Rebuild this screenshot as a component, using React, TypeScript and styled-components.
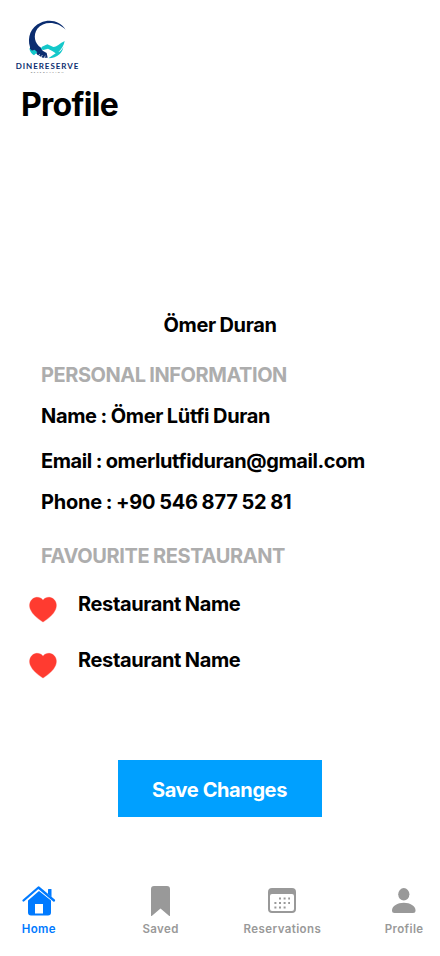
import React from "react";
import styled, { createGlobalStyle } from "styled-components";

const GlobalStyle = createGlobalStyle`
  * { box-sizing: border-box; }
  body { margin: 0; background: #fff; font-family: Inter, "Liberation Sans", sans-serif; }
`;

const Screen = styled.main`
  width: 440px;
  height: 956px;
  display: flex;
  flex-direction: column;
  overflow: hidden;
  background: #fff;
  color: #000;
`;

const Header = styled.header`
  height: 312px;
  padding: 14px 0 0 8px;
`;

const LogoMark = styled.svg`
  display: block;
  width: 80px;
  height: 64px;
`;

const PageTitle = styled.h1`
  margin: 6px 0 0 13px;
  font-size: 32px;
  line-height: 42px;
  font-weight: 700;
  letter-spacing: -0.7px;
`;

const Line = styled.p<{ $gap?: number; $muted?: boolean; $spacing?: number }>`
  margin: ${(p) => p.$gap ?? 0}px 0 0;
  font-size: 20px;
  line-height: 24px;
  font-weight: 700;
  letter-spacing: ${(p) => p.$spacing ?? -0.37}px;
  word-spacing: -0.6px;
  white-space: nowrap;
  color: ${(p) => (p.$muted ? "#adadad" : "#000")};
`;

const DisplayName = styled(Line)`
  text-align: center;
`;

const Details = styled.section`
  padding: 26px 0 0 41px;
`;

const Favourites = styled.ul`
  list-style: none;
  margin: 24px 0 0;
  padding: 0 0 0 28px;
  display: flex;
  flex-direction: column;
  gap: 24px;
`;

const Favourite = styled.li`
  display: flex;
  height: 32px;
  gap: 20px;
`;

const Heart = styled.svg`
  width: 30px;
  height: 28px;
  margin-top: 4px;
`;

const SaveButton = styled.button`
  align-self: center;
  width: 204px;
  height: 57px;
  margin-top: 80px;
  padding: 3px 1px 0 0;
  border: 0;
  background: #00a0ff;
  color: #fff;
  font: 700 20px/24px Inter, sans-serif;
  letter-spacing: -0.4px;
`;

const TabBar = styled.nav`
  width: 487px;
  margin: 67px 0 0 -22px;
  display: grid;
  grid-template-columns: repeat(4, 1fr);
`;

const Tab = styled.a<{ $active?: boolean }>`
  display: flex;
  flex-direction: column;
  align-items: center;
  color: ${(p) => (p.$active ? "#007aff" : "#999")};
  font-size: 11.5px;
  line-height: 18px;
  font-weight: 600;
  letter-spacing: 0.4px;
`;

const TabIcon = styled.svg`
  width: 36px;
  height: 36px;
  fill: currentColor;
`;

function Logo() {
  return (
    <LogoMark viewBox="0 0 240 192" role="img" aria-label="DineReserve">
      <path fill="#0b2d70" d="M173 47C156 21 126 14 98 26C68 38 57 70 66 99L66 111L80 110L88 122L104 131L119 131L116 117L104 110L99 101C79 88 75 63 88 44C106 22 145 20 173 47Z" />
      <path fill="#14c8ca" d="M170 81C155 88 149 98 136 99L118 91L102 98L98 105L106 108L120 104L134 112L143 118L121 133C149 133 165 113 166 98C164 105 158 112 151 115C162 103 168 93 170 81Z" />
      <path fill="#14c8ca" d="M64 102C65 112 70 119 78 124L88 115L80 107L72 110Z" />
      <path fill="none" stroke="#fff" strokeWidth="2" d="M91 127L95 120M99 131L103 123M108 133L112 125" />
      <text x="23" y="164" textLength="188" fill="#0b2d70" fontFamily="Lato, sans-serif" fontWeight="700" fontSize="24">DINERESERVE</text>
      <text x="68" y="177" textLength="98" fill="#777" fontFamily="Lato, sans-serif" fontWeight="700" fontSize="7.500">RESERVATION</text>
    </LogoMark>
  );
}

function FavouriteRow({ name }: { name: string }) {
  return (
    <Favourite>
      <Heart viewBox="0 0 30 28">
        <path fill="#ff3b30" stroke="#ff3b30" strokeOpacity=".35" d="M15 4.200C12.500 .8 7.800.5 4.800 2.800C1.500 5.300.8 9.700 2.500 13.600C4.600 18.400 9 22.200 15 26C21 22.200 25.400 18.400 27.500 13.600C29.200 9.700 28.500 5.300 25.200 2.800C22.200.5 17.500.8 15 4.200Z" />
      </Heart>
      <Line>{name}</Line>
    </Favourite>
  );
}

export default function App() {
  return (
    <>
      <GlobalStyle />
      <Screen>
        <Header>
          <Logo />
          <PageTitle>Profile</PageTitle>
        </Header>
        <DisplayName $gap={1}>Ömer Duran</DisplayName>
        <Details>
          <Line $muted $spacing={-0.45}>PERSONAL INFORMATION</Line>
          <Line $gap={17} $spacing={-0.33}>Name : Ömer Lütfi Duran</Line>
          <Line $gap={21} $spacing={-0.39}>Email : omerlutfiduran@gmail.com</Line>
          <Line $gap={17} $spacing={-0.25}>Phone : +90 546 877 52 81</Line>
          <Line $gap={30} $muted $spacing={-0.38}>FAVOURITE RESTAURANT</Line>
        </Details>
        <Favourites>
          <FavouriteRow name="Restaurant Name" />
          <FavouriteRow name="Restaurant Name" />
        </Favourites>
        <SaveButton>Save Changes</SaveButton>
        <TabBar>
          <Tab $active>
            <TabIcon viewBox="0 0 36 36">
              <path d="M18 7L7 16.500V28.500Q7 31.500 10 31.500H27Q30 31.500 30 28.500V16.500ZM14 20H22V29.500H14Z" fillRule="evenodd" />
              <path d="M2.500 16.500L17.500 3.500L33 16.500" fill="none" stroke="currentColor" strokeWidth="2.300" strokeLinecap="round" strokeLinejoin="round" />
              <path d="M27 5.500Q27 5 27.500 5H30Q30.500 5 30.500 5.500V13L27 10Z" />
            </TabIcon>
            <span>Home</span>
          </Tab>
          <Tab>
            <TabIcon viewBox="0 0 36 36">
              <path d="M8 5Q8 2 11 2H24Q27 2 27 5V31.500Q27 32.500 26 31.700L17.500 24.500L9 31.700Q8 32.500 8 31.500Z" />
            </TabIcon>
            <span>Saved</span>
          </Tab>
          <Tab>
            <TabIcon viewBox="0 0 36 36">
              <path fillRule="evenodd" d="M8 4H28Q32 4 32 8V25Q32 29 28 29H8Q4 29 4 25V8Q4 4 8 4ZM6 12V25Q6 27 8 27H28Q30 27 30 25V12Q30 10 28 10H8Q6 10 6 12Z" />
              <path d="M15 14.500H26M10.400 19H26M10.400 23.500H22" stroke="currentColor" strokeWidth="2" strokeDasharray="2 2.600" />
            </TabIcon>
            <span>Reservations</span>
          </Tab>
          <Tab>
            <TabIcon viewBox="0 0 36 36">
              <ellipse cx="17.800" cy="10.300" rx="5.600" ry="6.200" />
              <path d="M6 26.500C6 22 11.500 18.800 17.800 18.800S29.500 22 29.500 26.500Q29.500 29 27 29H8.500Q6 29 6 26.500Z" />
            </TabIcon>
            <span>Profile</span>
          </Tab>
        </TabBar>
      </Screen>
    </>
  );
}
